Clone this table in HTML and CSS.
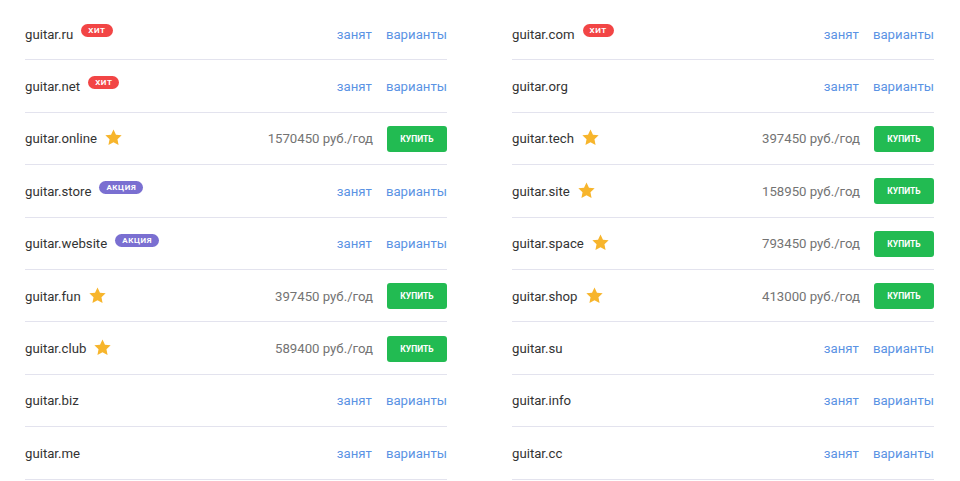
FILE: index.html
```html
<!DOCTYPE html>
<html lang="ru">
<head>
<meta charset="utf-8">
<link rel="stylesheet" href="styles.css">
</head>
<body>
<svg width="0" height="0" style="position:absolute">
  <defs>
    <symbol id="star" viewBox="0 0 24 24"><path d="M12 1.8l3.1 6.6 7.2.9-5.3 5 1.4 7.1L12 17.9l-6.4 3.5 1.4-7.1-5.3-5 7.2-.9z"/></symbol>
  </defs>
</svg>
<div class="grid">
  <div class="col">
    <div class="row"><span class="name">guitar.ru</span><span class="badge hit">ХИТ</span><span class="act"><a class="link">занят</a><a class="link">варианты</a></span></div>
    <div class="row"><span class="name">guitar.net</span><span class="badge hit">ХИТ</span><span class="act"><a class="link">занят</a><a class="link">варианты</a></span></div>
    <div class="row"><span class="name">guitar.online</span><svg class="star"><use href="#star"/></svg><span class="act"><span class="price">1570450 руб./год</span><button class="buy">КУПИТЬ</button></span></div>
    <div class="row"><span class="name">guitar.store</span><span class="badge promo">АКЦИЯ</span><span class="act"><a class="link">занят</a><a class="link">варианты</a></span></div>
    <div class="row"><span class="name">guitar.website</span><span class="badge promo">АКЦИЯ</span><span class="act"><a class="link">занят</a><a class="link">варианты</a></span></div>
    <div class="row"><span class="name">guitar.fun</span><svg class="star"><use href="#star"/></svg><span class="act"><span class="price">397450 руб./год</span><button class="buy">КУПИТЬ</button></span></div>
    <div class="row"><span class="name">guitar.club</span><svg class="star"><use href="#star"/></svg><span class="act"><span class="price">589400 руб./год</span><button class="buy">КУПИТЬ</button></span></div>
    <div class="row"><span class="name">guitar.biz</span><span class="act"><a class="link">занят</a><a class="link">варианты</a></span></div>
    <div class="row"><span class="name">guitar.me</span><span class="act"><a class="link">занят</a><a class="link">варианты</a></span></div>
  </div>
  <div class="col">
    <div class="row"><span class="name">guitar.com</span><span class="badge hit">ХИТ</span><span class="act"><a class="link">занят</a><a class="link">варианты</a></span></div>
    <div class="row"><span class="name">guitar.org</span><span class="act"><a class="link">занят</a><a class="link">варианты</a></span></div>
    <div class="row"><span class="name">guitar.tech</span><svg class="star"><use href="#star"/></svg><span class="act"><span class="price">397450 руб./год</span><button class="buy">КУПИТЬ</button></span></div>
    <div class="row"><span class="name">guitar.site</span><svg class="star"><use href="#star"/></svg><span class="act"><span class="price">158950 руб./год</span><button class="buy">КУПИТЬ</button></span></div>
    <div class="row"><span class="name">guitar.space</span><svg class="star"><use href="#star"/></svg><span class="act"><span class="price">793450 руб./год</span><button class="buy">КУПИТЬ</button></span></div>
    <div class="row"><span class="name">guitar.shop</span><svg class="star"><use href="#star"/></svg><span class="act"><span class="price">413000 руб./год</span><button class="buy">КУПИТЬ</button></span></div>
    <div class="row"><span class="name">guitar.su</span><span class="act"><a class="link">занят</a><a class="link">варианты</a></span></div>
    <div class="row"><span class="name">guitar.info</span><span class="act"><a class="link">занят</a><a class="link">варианты</a></span></div>
    <div class="row"><span class="name">guitar.cc</span><span class="act"><a class="link">занят</a><a class="link">варианты</a></span></div>
  </div>
</div>
</body>
</html>
```
FILE: styles.css
```css
* { box-sizing: border-box; }
html, body { margin: 0; padding: 0; background: #fff; }
body {
  font-family: Roboto, "Noto Sans", Arial, sans-serif;
  font-size: 13.2px;
  color: #333;
  padding: 8px 26px 0 25px;
}
.grid {
  display: grid;
  grid-template-columns: 1fr 1fr;
  column-gap: 65px;
}
.col { display: flex; flex-direction: column; }
.row {
  display: flex;
  align-items: center;
  height: 52.4px;
  border-bottom: 1px solid #e3e3ee;
  padding-top: 1px;
}
.name { color: #333; }
.badge {
  align-self: flex-start;
  margin-top: 15px;
  margin-left: 8px;
  height: 13px;
  line-height: 13px;
  padding: 0 7px;
  border-radius: 7px;
  color: #fff;
  font-size: 8px;
  font-weight: 700;
  letter-spacing: 0.6px;
}
.hit { background: #f24545; }
.promo { background: #7a6fd1; }
.star {
  width: 19px;
  height: 19px;
  margin-left: 7px;
  fill: #f7b52c;
  margin-top: -2px;
}
.act {
  margin-left: auto;
  display: flex;
  align-items: center;
  gap: 14px;
}
.link { color: #5b93e4; }
.price { color: #737373; }
.buy {
  width: 60px;
  height: 26px;
  border: none;
  border-radius: 3px;
  background: #22bb52;
  color: #fff;
  font-family: Roboto, Arial, sans-serif;
  font-size: 8.5px;
  font-weight: 700;
  padding: 0;
}
```
